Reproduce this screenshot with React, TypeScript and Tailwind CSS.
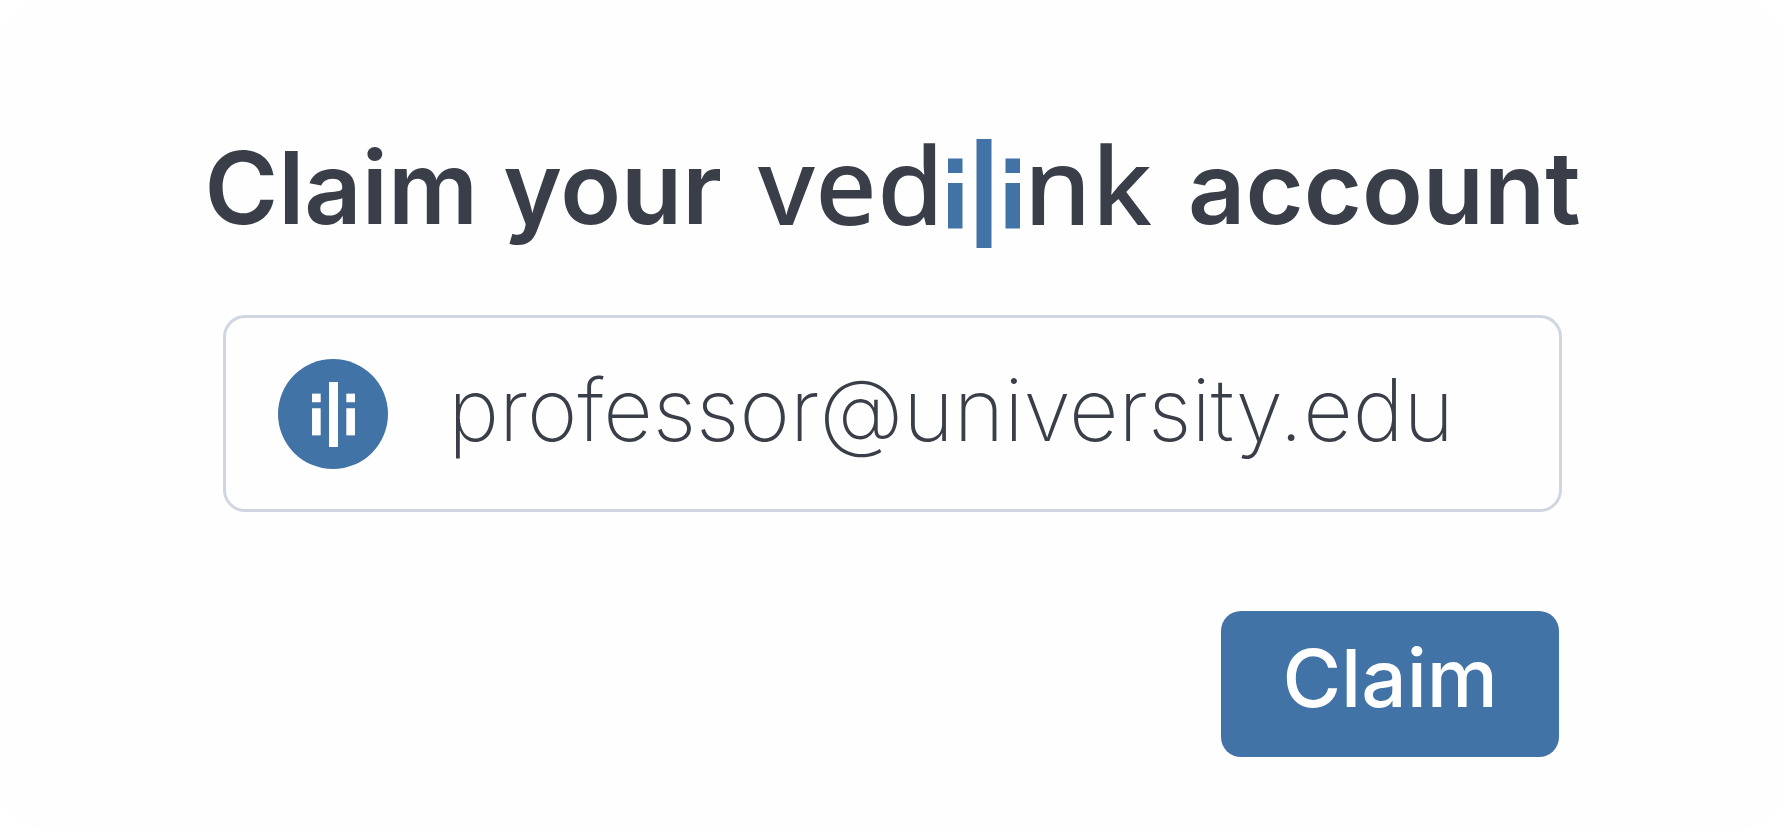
function Bars({ className }: { className: string }) {
  return (
    <svg viewBox="0 0 72 109" className={className} fill="currentColor" aria-hidden="true">
      <rect x="0" y="19.5" width="14.5" height="14.5" />
      <rect x="0" y="44" width="14.5" height="45.5" />
      <rect x="28.5" y="0" width="15" height="109" />
      <rect x="57.5" y="19.5" width="14.5" height="14.5" />
      <rect x="57.5" y="44" width="14.5" height="45.5" />
    </svg>
  );
}

function Wordmark() {
  return (
    <span className="flex items-end font-['Noto_Sans',sans-serif] text-[108px] leading-[112px] font-medium">
      <span className="pb-2">ved</span>
      <Bars className="mx-1 h-[109px] w-[72px] text-[#4273a6]" />
      <span className="pb-2">nk</span>
    </span>
  );
}

export default function App() {
  return (
    <div className="min-h-screen bg-white font-[Inter,sans-serif] text-[#393e49]">
      <main className="flex min-h-screen flex-col rounded-[48px] bg-[#fefefe] pt-32 pb-[73px]">
        <h1 className="flex items-center justify-center gap-9 text-[100px] leading-[120px] font-semibold whitespace-nowrap">
          <span>Claim your</span>
          <Wordmark />
          <span>account</span>
        </h1>
        <form className="mx-auto mt-[67px] flex w-3/4 flex-col items-end" onSubmit={(e) => e.preventDefault()}>
          <label className="flex w-full items-center rounded-[22px] border-[3px] border-[#cfd6e1] px-[52px] pt-[41px] pb-10">
            <span className="flex size-[110px] shrink-0 items-center justify-center rounded-full bg-[#4273a6]">
              <Bars className="h-[65px] w-[43px] text-white" />
            </span>
            <input
              type="email"
              aria-label="Email address"
              defaultValue="professor@university.edu"
              className="ml-[60px] h-[110px] min-w-0 flex-1 bg-transparent pb-2 text-[86px] leading-[102px] font-extralight outline-none"
            />
          </label>
          <button type="submit" className="mt-[99px] mr-[3px] rounded-[20px] bg-[#4273a6] px-[61px] pt-[14px] pb-[26px] text-[80px] leading-[106px] font-medium text-white">
            Claim
          </button>
        </form>
      </main>
    </div>
  );
}
